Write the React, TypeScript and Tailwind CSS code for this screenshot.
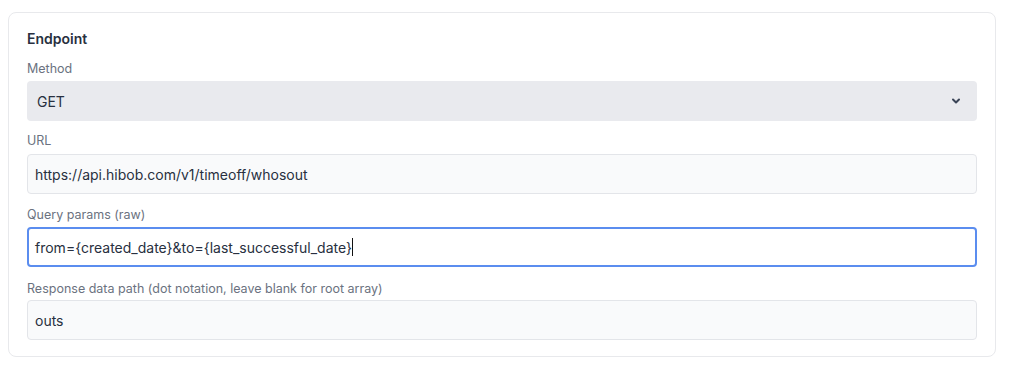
import React from "react";

export default function App() {
  const font = { fontFamily: "Inter, 'Noto Sans', sans-serif" };
  return (
    <div className="w-[1024px] h-[371px] bg-white pt-[12px] pl-[8px]" style={font}>
      <div className="w-[988px] rounded-[8px] border border-[#e8e9ec] px-[18px] pt-[16px] pb-[16px]">
        <div className="text-[14px] leading-[20px] font-semibold text-[#283040]">Endpoint</div>
        <div className="mt-[12px] text-[12.5px] leading-[16px] text-[#6b7280]">Method</div>
        <div className="mt-[4px] h-[40px] rounded-[4px] bg-[#e9eaee] flex items-center justify-between pl-[10px] pr-[16px]">
          <span className="text-[14px] text-[#283040]">GET</span>
          <svg width="10" height="8" viewBox="0 0 10 8" fill="none">
            <path d="M2 2.5 L5 5.5 L8 2.5" stroke="#3a4456" strokeWidth="2" strokeLinecap="round" strokeLinejoin="round" />
          </svg>
        </div>
        <div className="mt-[12px] text-[12.5px] leading-[16px] text-[#6b7280]">URL</div>
        <div className="mt-[5px] h-[40px] rounded-[4px] bg-[#f9fafb] border border-[#e3e5e9] flex items-center pl-[7px]">
          <span className="text-[14px] text-[#283040]">https://api.hibob.com/v1/timeoff/whosout</span>
        </div>
        <div className="mt-[13px] text-[12.5px] leading-[16px] text-[#6b7280]">Query params (raw)</div>
        <div className="mt-[4px] h-[40px] rounded-[4px] bg-white border-2 border-[#5b8def] flex items-center pl-[6px]">
          <span className="text-[14px] text-[#283040]">from={"{"}created_date{"}"}&amp;to={"{"}last_successful_date{"}"}</span>
          <span className="w-[1px] h-[18px] bg-[#111]" />
        </div>
        <div className="mt-[14px] text-[12.5px] leading-[16px] text-[#6b7280]">Response data path (dot notation, leave blank for root array)</div>
        <div className="mt-[3px] h-[40px] rounded-[4px] bg-[#f9fafb] border border-[#e3e5e9] flex items-center pl-[7px]">
          <span className="text-[14px] text-[#283040]">outs</span>
        </div>
      </div>
    </div>
  );
}
